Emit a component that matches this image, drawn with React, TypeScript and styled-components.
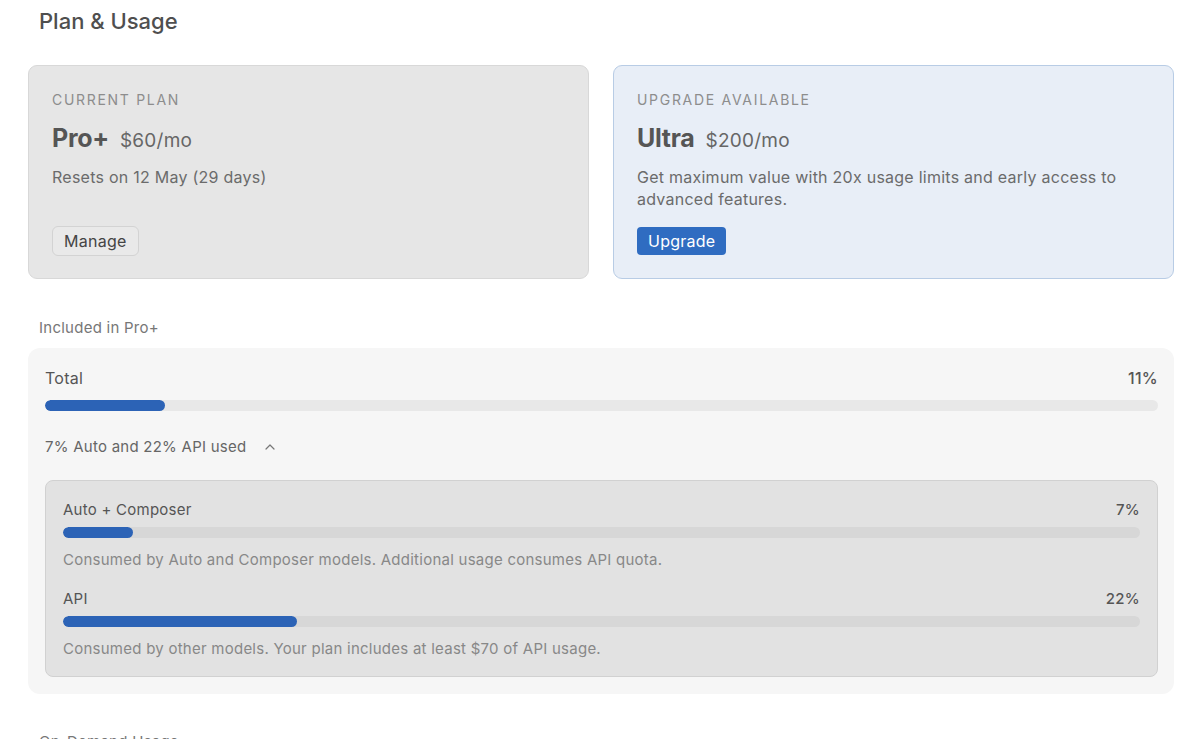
import React from "react";
import styled, { createGlobalStyle } from "styled-components";
import { ChevronUp } from "lucide-react";

const GlobalStyle = createGlobalStyle`
    body {
        margin: 0;
        background: #ffffff;
        font-family: Inter, "Liberation Sans", Arial, sans-serif;
        letter-spacing: 0.25px;
        -webkit-font-smoothing: antialiased;
    }
`;

const usageRows = [
    {
        name: "Auto + Composer",
        percent: 7,
        fill: 6.5,
        note: "Consumed by Auto and Composer models. Additional usage consumes API quota.",
    },
    {
        name: "API",
        percent: 22,
        fill: 21.7,
        note: "Consumed by other models. Your plan includes at least $70 of API usage.",
    },
];

const App = () => {
    return (
        <React.Fragment>
            <GlobalStyle />
            <Page>
                <Title>Plan &amp; Usage</Title>

                <PlanGrid>
                    <PlanCard>
                        <Eyebrow>CURRENT PLAN</Eyebrow>
                        <PlanHeading>
                            <PlanName>Pro+</PlanName>
                            <PlanPrice>$60/mo</PlanPrice>
                        </PlanHeading>
                        <PlanText>Resets on 12 May (29 days)</PlanText>
                        <ManageButton>Manage</ManageButton>
                    </PlanCard>

                    <PlanCard $highlight>
                        <Eyebrow>UPGRADE AVAILABLE</Eyebrow>
                        <PlanHeading>
                            <PlanName>Ultra</PlanName>
                            <PlanPrice>$200/mo</PlanPrice>
                        </PlanHeading>
                        <PlanText>
                            Get maximum value with 20x usage limits and early access to
                            advanced features.
                        </PlanText>
                        <UpgradeButton>Upgrade</UpgradeButton>
                    </PlanCard>
                </PlanGrid>

                <SectionLabel>Included in Pro+</SectionLabel>

                <UsagePanel>
                    <TotalRow>
                        <span>Total</span>
                        <Percent>11%</Percent>
                    </TotalRow>
                    <Track>
                        <Fill style={{ width: "10.8%" }} />
                    </Track>

                    <Breakdown>
                        7% Auto and 22% API used
                        <ChevronUp size={16} strokeWidth={1.8} />
                    </Breakdown>

                    <DetailBox>
                        {usageRows.map((row) => (
                            <DetailItem key={row.name}>
                                <DetailRow>
                                    <span>{row.name}</span>
                                    <Percent>{row.percent}%</Percent>
                                </DetailRow>
                                <Track $inner>
                                    <Fill style={{ width: `${row.fill}%` }} />
                                </Track>
                                <DetailNote>{row.note}</DetailNote>
                            </DetailItem>
                        ))}
                    </DetailBox>
                </UsagePanel>

                <SectionLabel $spaced>On-Demand Usage</SectionLabel>
            </Page>
        </React.Fragment>
    );
};

export default App;

const Page = styled.div`
    padding: 7px 26px 40px 28px;
    height: 739px;
    box-sizing: border-box;
    overflow: hidden;
`;

const Title = styled.h1`
    margin: 0 0 0 11px;
    font-size: 22px;
    line-height: 28px;
    font-weight: 500;
    letter-spacing: 0;
    color: #4f4f4f;
`;

const PlanGrid = styled.div`
    display: grid;
    grid-template-columns: 1fr 1fr;
    gap: 24px;
    margin-top: 30px;
`;

const PlanCard = styled.div<{ $highlight?: boolean }>`
    display: flex;
    flex-direction: column;
    align-items: flex-start;
    padding: 24px 23px 23px;
    border-radius: 9px;
    border: 1px solid ${(p) => (p.$highlight ? "#b8cce5" : "#d8d8d8")};
    background: ${(p) => (p.$highlight ? "#e8eef7" : "#e6e6e6")};
`;

const Eyebrow = styled.div`
    font-size: 14px;
    line-height: 20px;
    letter-spacing: 1.7px;
    color: #8d8d8d;
`;

const PlanHeading = styled.div`
    display: flex;
    align-items: baseline;
    gap: 11px;
    height: 28px;
    margin-top: 14px;
    line-height: 28px;
`;

const PlanName = styled.span`
    font-size: 25px;
    font-weight: 700;
    color: #555555;
    letter-spacing: -0.3px;
`;

const PlanPrice = styled.span`
    font-size: 19px;
    color: #666666;
`;

const PlanText = styled.p`
    margin: 14px 0 0;
    font-size: 16px;
    line-height: 22px;
    color: #6b6b6b;
`;

const ManageButton = styled.button`
    margin-top: auto;
    margin-bottom: -1px;
    height: 30px;
    padding: 0 11px;
    border: 1px solid #d3d3d3;
    border-radius: 6px;
    background: #e9e9e9;
    font-family: inherit;
    font-size: 16px;
    letter-spacing: 0.25px;
    color: #444444;
`;

const UpgradeButton = styled.button`
    margin-top: 17px;
    height: 28px;
    padding: 0 11px;
    border: none;
    border-radius: 4px;
    background: #2f6cc1;
    font-family: inherit;
    font-size: 16px;
    letter-spacing: 0.25px;
    color: #ffffff;
`;

const SectionLabel = styled.div<{ $spaced?: boolean }>`
    margin: ${(p) => (p.$spaced ? "38px" : "39px")} 0 0 11px;
    font-size: 15px;
    line-height: 20px;
    color: #777777;
`;

const UsagePanel = styled.div`
    margin-top: 10px;
    padding: 19px 16px 17px 17px;
    border-radius: 12px;
    background: #f6f6f6;
`;

const TotalRow = styled.div`
    display: flex;
    justify-content: space-between;
    font-size: 16px;
    line-height: 22px;
    color: #555555;
`;

const Percent = styled.span`
    font-weight: 500;
    color: #555555;
`;

const Track = styled.div<{ $inner?: boolean }>`
    margin-top: ${(p) => (p.$inner ? "7px" : "11px")};
    height: 11px;
    border-radius: 6px;
    background: ${(p) => (p.$inner ? "#d7d7d7" : "#e8e8e8")};
    overflow: hidden;
`;

const Fill = styled.div`
    height: 100%;
    border-radius: 6px;
    background: #2c63b6;
`;

const Breakdown = styled.div`
    display: flex;
    align-items: center;
    gap: 16px;
    margin-top: 26px;
    font-size: 15px;
    line-height: 20px;
    color: #666666;

    svg {
        color: #777777;
    }
`;

const DetailBox = styled.div`
    margin-top: 23px;
    padding: 19px 17px 17px;
    border: 1px solid #d1d1d1;
    border-radius: 8px;
    background: #e2e2e2;
    display: flex;
    flex-direction: column;
    gap: 19px;
`;

const DetailItem = styled.div``;

const DetailRow = styled.div`
    display: flex;
    justify-content: space-between;
    font-size: 15px;
    line-height: 20px;
    color: #555555;
`;

const DetailNote = styled.div`
    margin-top: 12px;
    font-size: 15px;
    line-height: 20px;
    color: #888888;
`;
